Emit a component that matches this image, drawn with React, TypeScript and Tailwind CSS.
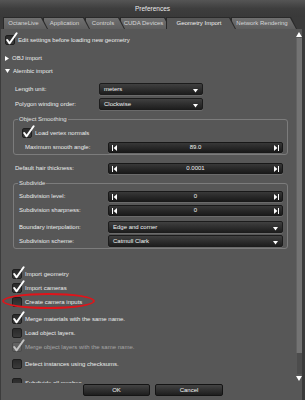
import React from "react";

function Check({ checked, disabled }: { checked?: boolean; disabled?: boolean }) {
  return (
    <div className="relative w-[10px] h-[10px] shrink-0">
      <div
        className={`w-[10px] h-[10px] rounded-[2px] border ${
          disabled ? "border-[#4a4a4a] bg-[#626262]" : "border-[#1e1e1e] bg-gradient-to-b from-[#2a2a2a] to-[#3a3a3a]"
        }`}
      />
      {checked && (
        <svg className="absolute -left-[0px] -top-[3px]" width="13" height="13" viewBox="0 0 13 13">
          <path
            d="M2.2 8 L4.6 11.3 L11.6 1.2"
            fill="none"
            stroke={disabled ? "#c4c4c4" : "#ffffff"}
            strokeWidth="2"
            strokeLinecap="round"
            strokeLinejoin="round"
          />
        </svg>
      )}
    </div>
  );
}

function Dropdown({ value, w }: { value: string; w: string }) {
  return (
    <div
      className={`${w} h-[12px] rounded-[2px] border border-[#1c1c1c] bg-gradient-to-b from-[#404040] to-[#1e1e1e] shadow-[0_1px_0_#6a6a6a] flex items-center pl-[4px] pr-[4px] text-[#f2f2f2]`}
    >
      <span className="flex-1">{value}</span>
      <svg width="5" height="4" viewBox="0 0 5 4" className="mt-[3px]">
        <path d="M0 0H5L2.5 3.5Z" fill="#ffffff" />
      </svg>
    </div>
  );
}

function Slider({ value, w }: { value: string; w: string }) {
  return (
    <div
      className={`${w} h-[11px] rounded-[2px] border border-[#181818] bg-gradient-to-b from-[#383838] to-[#1a1a1a] shadow-[0_1px_0_#6a6a6a] flex items-center px-[3px] text-[#f2f2f2]`}
    >
      <svg width="5" height="6" viewBox="0 0 5 6">
        <rect x="0" y="0" width="1" height="6" fill="#ffffff" />
        <path d="M5 0V6L1.6 3Z" fill="#ffffff" />
      </svg>
      <span className="flex-1 text-center">{value}</span>
      <svg width="5" height="6" viewBox="0 0 5 6">
        <rect x="4" y="0" width="1" height="6" fill="#ffffff" />
        <path d="M0 0V6L3.4 3Z" fill="#ffffff" />
      </svg>
    </div>
  );
}

function Tab({ label, cls, active }: { label: string; cls: string; active?: boolean }) {
  return (
    <div
      className={`${cls} h-[12px] bg-[#2a2a2a] pt-[1px] pl-[1px] [clip-path:polygon(0_0,calc(100%_-_6px)_0,100%_100%,0_100%)]`}
    >
      <div
        className={`h-full ${
          active ? "bg-[#575757] text-[#f0f0f0]" : "bg-gradient-to-b from-[#707070] to-[#5e5e5e] text-[#d6d6d6]"
        } [clip-path:polygon(0_0,calc(100%_-_7px)_0,calc(100%_-_1px)_100%,0_100%)] flex items-center justify-center pr-[5px] whitespace-nowrap`}
      >
        {label}
      </div>
    </div>
  );
}

function CheckRow({ label, checked, disabled, cls }: { label: string; checked?: boolean; disabled?: boolean; cls?: string }) {
  return (
    <div className={`h-[14px] flex items-center pl-[11px] gap-[3px] ${cls ?? ""}`}>
      <Check checked={checked} disabled={disabled} />
      <span className={disabled ? "text-[#a6a6a6]" : ""}>{label}</span>
    </div>
  );
}

export default function App() {
  return (
    <div className="w-[305px] h-[400px] bg-[#3a3a3a] font-['Liberation_Sans',Arial,sans-serif] text-[6px] leading-[7px] text-[#ececec] flex flex-col overflow-hidden">
      <div className="h-[17px] shrink-0 flex items-center justify-center text-[6.5px] text-[#ececec] bg-gradient-to-b from-[#555555] via-[#3e3e3e] to-[#393939]">
        Preferences
      </div>
      <div className="h-[12px] shrink-0 flex pl-[3px]">
        <Tab label="OctaneLive" cls="w-[45px] z-[6]" />
        <Tab label="Application" cls="w-[47px] -ml-[5px] z-[5]" />
        <Tab label="Controls" cls="w-[40px] -ml-[5px] z-[4]" />
        <Tab label="CUDA Devices" cls="w-[51px] -ml-[5px] z-[3]" />
        <Tab label="Geometry Import" cls="w-[70px] -ml-[5px] z-[10]" active />
        <Tab label="Network Rendering" cls="w-[66px] -ml-[5px] z-[1]" />
      </div>
      <div className="flex-1 flex flex-col bg-[#575757] border-l border-[#3c3c3c] mr-[3px]">
        <div className="h-[354px] shrink-0 flex">
          <div className="flex-1 overflow-hidden flex flex-col">
            <div className="h-[12px] mt-[5px] shrink-0 flex items-center pl-[4px] gap-[3px]">
              <Check checked />
              <span>Edit settings before loading new geometry</span>
            </div>
            <div className="h-[12px] mt-[6px] shrink-0 flex items-center pl-[4px] gap-[3px]">
              <svg width="4" height="5" viewBox="0 0 4 5">
                <path d="M0 0L4 2.5L0 5Z" fill="#ffffff" />
              </svg>
              <span>OBJ import</span>
            </div>
            <div className="h-[12px] mt-[1px] shrink-0 flex items-center pl-[4px] gap-[3px]">
              <svg width="5" height="4" viewBox="0 0 5 4">
                <path d="M0 0H5L2.5 4Z" fill="#ffffff" />
              </svg>
              <span>Alembic import</span>
            </div>
            <div className="h-[12px] mt-[6px] shrink-0 flex items-center">
              <span className="w-[98px] pl-[14px]">Length unit:</span>
              <Dropdown value="meters" w="w-[104px]" />
            </div>
            <div className="h-[12px] mt-[3px] shrink-0 flex items-center">
              <span className="w-[98px] pl-[14px]">Polygon winding order:</span>
              <Dropdown value="Clockwise" w="w-[104px]" />
            </div>
            <fieldset className="mt-[6px] ml-[12px] w-[275px] shrink-0 border border-[#7c7c7c] rounded-[3px] p-0 pb-[1px]">
              <legend className="ml-[4px] px-[1px] leading-[7px] text-[#e0e0e0]">Object Smoothing</legend>
              <div className="pt-[4px] h-[16px] flex items-center pl-[8px] gap-[3px]">
                <Check checked />
                <span>Load vertex normals</span>
              </div>
              <div className="mt-[3px] h-[11px] flex items-center">
                <span className="w-[94px] pl-[11px]">Maximum smooth angle:</span>
                <Slider value="89.0" w="w-[175px]" />
              </div>
            </fieldset>
            <div className="h-[11px] mt-[8px] shrink-0 flex items-center">
              <span className="w-[107px] pl-[14px]">Default hair thickness:</span>
              <Slider value="0.0001" w="w-[175px]" />
            </div>
            <fieldset className="mt-[6px] ml-[12px] w-[275px] shrink-0 border border-[#7c7c7c] rounded-[3px] p-0 pb-[1px]">
              <legend className="ml-[4px] px-[1px] leading-[7px] text-[#e0e0e0]">Subdivide</legend>
              <div className="mt-[4px] h-[11px] flex items-center">
                <span className="w-[94px] pl-[5px]">Subdivision level:</span>
                <Slider value="0" w="w-[175px]" />
              </div>
              <div className="mt-[3px] h-[11px] flex items-center">
                <span className="w-[94px] pl-[5px]">Subdivision sharpness:</span>
                <Slider value="0" w="w-[175px]" />
              </div>
              <div className="mt-[5px] h-[12px] flex items-center">
                <span className="w-[94px] pl-[5px]">Boundary interpolation:</span>
                <Dropdown value="Edge and corner" w="w-[175px]" />
              </div>
              <div className="mt-[2px] h-[12px] flex items-center">
                <span className="w-[94px] pl-[5px]">Subdivision scheme:</span>
                <Dropdown value="Catmull Clark" w="w-[175px]" />
              </div>
            </fieldset>
            <div className="mt-[18px] shrink-0 flex flex-col">
              <CheckRow label="Import geometry" checked />
              <CheckRow label="Import cameras" checked />
              <div className="relative">
                <CheckRow label="Create camera inputs" />
                <div className="absolute -top-[2px] left-[1px] w-[93px] h-[16px] rounded-[50%] border-2 border-[#e0141a]" />
              </div>
            </div>
            <div className="mt-[3px] shrink-0 flex flex-col">
              <CheckRow label="Merge materials with the same name." checked />
              <CheckRow label="Load object layers." />
              <CheckRow label="Merge object layers with the same name." checked disabled />
            </div>
            <CheckRow label="Detect instances using checksums." cls="mt-[3px] shrink-0" />
            <CheckRow label="Subdivide all meshes" cls="mt-[5px] shrink-0" />
          </div>
          <div className="w-[6px] shrink-0 flex flex-col items-center pt-[3px]">
            <svg width="6" height="5" viewBox="0 0 6 5">
              <path d="M0 5H6L3 0Z" fill="#ffffff" />
            </svg>
            <div className="w-[6px] h-[315px] mt-[1px] bg-[#737373] border-l border-[#626262]" />
            <div className="w-[5px] h-[21px] bg-[#4c4c4c]" />
            <svg width="6" height="5" viewBox="0 0 6 5" className="mt-[2px]">
              <path d="M0 0H6L3 5Z" fill="#ffffff" />
            </svg>
          </div>
        </div>
        <div className="flex justify-center gap-[5px] pt-[1px] pl-[3px]">
          <div className="w-[67px] h-[12px] rounded-[2px] border border-[#141414] bg-gradient-to-b from-[#444444] to-[#1e1e1e] flex items-center justify-center text-[#f4f4f4]">
            OK
          </div>
          <div className="w-[68px] h-[12px] rounded-[2px] border border-[#141414] bg-gradient-to-b from-[#444444] to-[#1e1e1e] flex items-center justify-center text-[#f4f4f4]">
            Cancel
          </div>
        </div>
      </div>
    </div>
  );
}
